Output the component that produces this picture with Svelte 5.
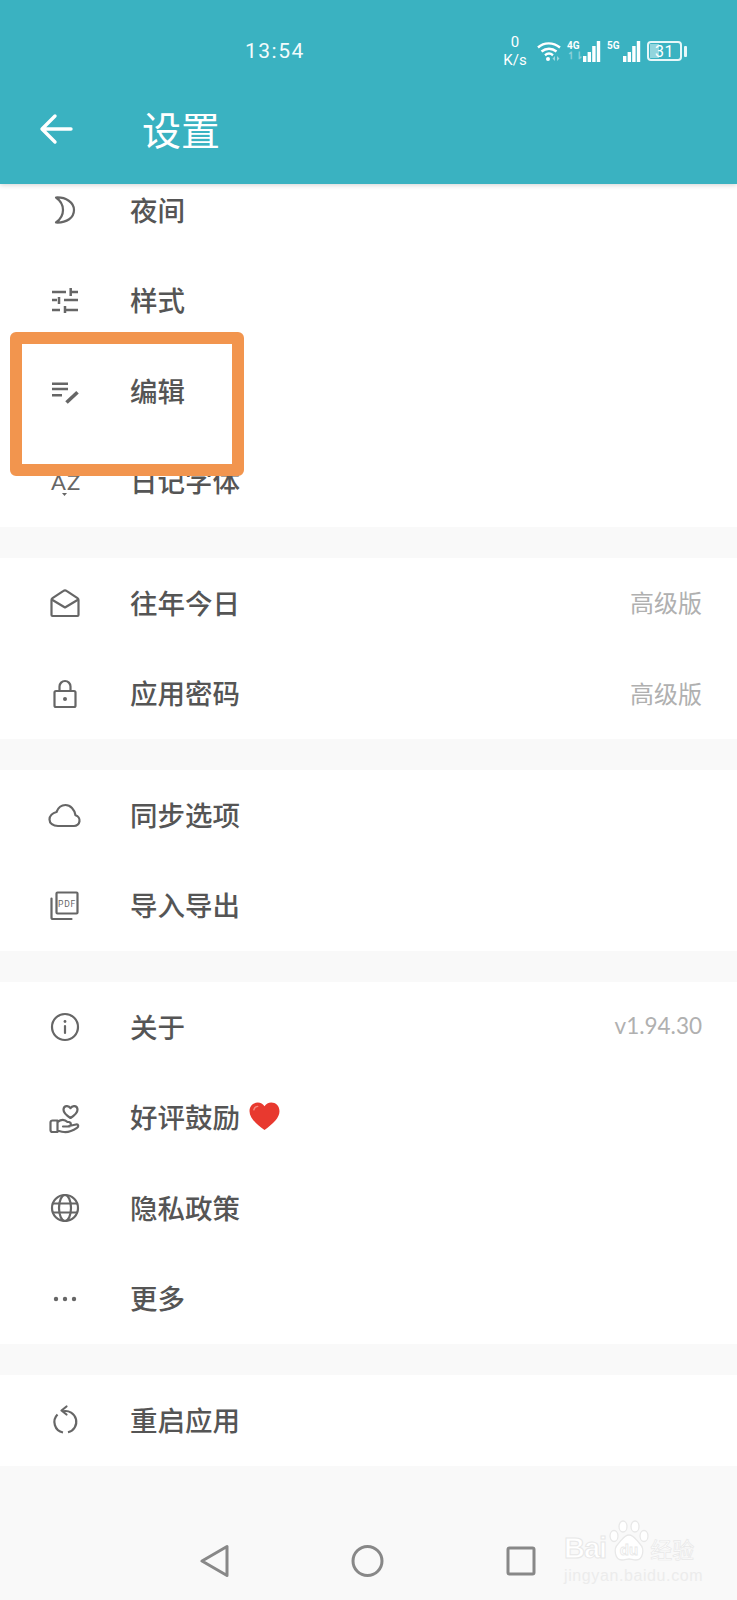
<script lang="ts">
  type Row = { id: string; label: string; note?: string; heart?: boolean };

  const sections: Row[][] = [
    [
      { id: 'moon', label: '夜间' },
      { id: 'tune', label: '样式' },
      { id: 'edit', label: '编辑' },
      { id: 'font', label: '日记字体' },
    ],
    [
      { id: 'mail', label: '往年今日', note: '高级版' },
      { id: 'lock', label: '应用密码', note: '高级版' },
    ],
    [
      { id: 'cloud', label: '同步选项' },
      { id: 'pdf', label: '导入导出' },
    ],
    [
      { id: 'info', label: '关于', note: 'v1.94.30' },
      { id: 'hand', label: '好评鼓励', heart: true },
      { id: 'globe', label: '隐私政策' },
      { id: 'dots', label: '更多' },
    ],
    [{ id: 'restart', label: '重启应用' }],
  ];

  const bars = [
    { x: 0, h: 6 },
    { x: 4.6, h: 10 },
    { x: 9.2, h: 16 },
    { x: 13.8, h: 21 },
  ];
</script>

<div class="phone">
  <header class="appbar">
    <div class="status">
      <span class="time">13:54</span>
      <div class="speed"><span>0</span><span>K/s</span></div>
      <svg class="wifi" width="24" height="20" viewBox="0 0 24 20" fill="none" stroke="#fff" stroke-width="2.4">
        <path d="M1 6.500C7 1 16 1 23 6.500" />
        <path d="M4.500 10.500C9 6.800 15 6.800 19.500 10.500" />
        <path d="M8 14.200c2.500-2 5.500-2 8 0" />
        <circle cx="11" cy="18" r="2" fill="#fff" stroke="none" />
        <path d="M18 15l-2.500 2.500 2.500 2.500zM20 15l2.500 2.500-2.500 2.500z" fill="#fff" stroke="none" opacity="0.5" />
      </svg>
      <div class="sim">
        <div class="sim-tag"><span>4G</span><span class="faint">↿⇂</span></div>
        <svg width="18" height="21" viewBox="0 0 18 21" fill="#fff">
          {#each bars as bar}
            <rect x={bar.x} y={21 - bar.h} width="3.400" height={bar.h} />
          {/each}
        </svg>
      </div>
      <div class="sim">
        <div class="sim-tag"><span>5G</span></div>
        <svg width="18" height="21" viewBox="0 0 18 21" fill="#fff">
          {#each bars as bar}
            <rect x={bar.x} y={21 - bar.h} width="3.400" height={bar.h} />
          {/each}
        </svg>
      </div>
      <div class="battery">
        <div class="cell"><i></i><span>31</span></div>
        <b></b>
      </div>
    </div>
    <div class="titlebar">
      <svg class="back" width="34" height="32" viewBox="0 0 34 32" fill="none" stroke="#fff" stroke-width="3.400" stroke-linecap="round" stroke-linejoin="round">
        <path d="M16 3L3 16l13 13M3.500 16H32" />
      </svg>
      <h1>设置</h1>
    </div>
  </header>

  <main class="list">
    {#each sections as rows}
      <section class="group">
        {#each rows as row}
          <div class="row">
            <svg class="icon" width="32" height="32" viewBox="0 0 32 32" fill="none" stroke="#666" stroke-width="2.200" stroke-linecap="round" stroke-linejoin="round">
              {#if row.id === 'moon'}
                <path d="M7 3.500C17 3 25 8.500 25 16S18 29 7 28.500C12 25 14 21 14 16S12 7 7 3.500Z" />
              {:else if row.id === 'tune'}
                <g stroke-width="2.500" stroke-linecap="butt">
                  <path d="M3 7h14M21.700 3v8M21.700 7H29M3 15h5M10 12v7M15 15h14M3 25h8M16 21v7M16 25h13" />
                </g>
              {:else if row.id === 'edit'}
                <path d="M3 8.700h16M3 14h16M3 20.300h10" stroke-width="2.400" stroke-linecap="butt" />
                <path d="M17.500 27.500l11-10.300" stroke-width="3.600" stroke-linecap="butt" />
              {:else if row.id === 'font'}
                <text class="az" x="2" y="24">A</text>
                <text class="az" x="18" y="24">Z</text>
                <path d="M13 27h5l-2.500 3z" fill="#666" stroke="none" />
              {:else if row.id === 'mail'}
                <path d="M2.500 13c0-.8.300-1.400 1-1.900L14.500 3.800c1-.7 2-.7 3 0l11 7.300c.7.500 1 1.100 1 1.900V28a1 1 0 0 1-1 1h-25a1 1 0 0 1-1-1Z" />
                <path d="M3.500 13L16 20.500 28.500 13" />
              {:else if row.id === 'lock'}
                <rect x="5.500" y="13" width="21" height="16" rx="1.500" />
                <path d="M10.500 13V8.500a5.500 5.500 0 0 1 11 0V13" />
                <circle cx="16" cy="21" r="2" fill="#666" stroke="none" />
              {:else if row.id === 'cloud'}
                <path d="M9 27H25a5.500 5.500 0 0 0 1.500-10.800C25.500 10.500 21.500 6 16.500 6c-4.500 0-7.500 3-9 7C3.500 14 .500 17 .500 20.500c0 3.800 3.500 6.500 8.500 6.500Z" />
              {:else if row.id === 'pdf'}
                <rect x="7.500" y="2.500" width="21" height="21" rx="1" />
                <path d="M2.500 8.500v19a1.500 1.500 0 0 0 1.500 1.500H22.500" />
                <text class="pdf" x="18" y="16.500">PDF</text>
              {:else if row.id === 'info'}
                <circle cx="16" cy="16" r="13" />
                <path d="M16 15v7" />
                <circle cx="16" cy="10.500" r="1.400" fill="#666" stroke="none" />
              {:else if row.id === 'hand'}
                <path d="M21.500 16c-3.800-2.500-7-4.800-7-8.300 0-4 5-5 7-1.500 2-3.500 7-2.500 7 1.500 0 3.500-3.200 5.800-7 8.300Z" />
                <path d="M8.500 18.500V30H3.500a2 2 0 0 1-2-2v-7.500a2 2 0 0 1 2-2ZM8.500 20c4-3 7-3 10 0h1.500a2.300 2.300 0 0 1 0 4.500H14M20 24l7-1.500c2.500-.5 3 2 1 3.300C24 28.500 20 30.500 15 30c-2.500-.3-4.500-1-6.500-1.500" />
              {:else if row.id === 'globe'}
                <circle cx="16" cy="16" r="13" />
                <ellipse cx="16" cy="16" rx="6" ry="13" />
                <path d="M4 11.500h24M4 20.500h24" />
              {:else if row.id === 'dots'}
                <g fill="#666" stroke="none">
                  <circle cx="7" cy="16" r="2.200" /><circle cx="16" cy="16" r="2.200" /><circle cx="25" cy="16" r="2.200" />
                </g>
              {:else if row.id === 'restart'}
                <path d="M8.500 10.500A10.700 10.700 0 0 0 14 28.500" stroke-linecap="butt" />
                <path d="M14 7.300A10.700 10.700 0 0 1 19 28.300" stroke-linecap="butt" />
                <path d="M17.500 2.500L12.500 6.500 17.500 10.500" />
              {/if}
            </svg>
            <span class="label">{row.label}</span>
            {#if row.heart}
              <svg class="heart" width="31" height="29" viewBox="0 0 32 30">
                <path d="M16 29C7 22 .500 16.500.500 9.500.500 4 4.500.500 9 .500c3 0 5.500 1.500 7 4 1.500-2.500 4-4 7-4 4.500 0 8.500 3.500 8.500 9C31.500 16.500 25 22 16 29Z" fill="#e8392f" />
                <path d="M5 8c.5-2 2-3.500 4-3.500" fill="none" stroke="#f6897f" stroke-width="1.500" stroke-linecap="round" />
              </svg>
            {/if}
            {#if row.note}
              <span class="note" class:latin={row.note.startsWith('v')}>{row.note}</span>
            {/if}
          </div>
        {/each}
      </section>
    {/each}
  </main>

  <footer class="nav">
    <svg width="29" height="34" viewBox="0 0 29 34" fill="none" stroke="#888" stroke-width="3" stroke-linejoin="round">
      <path d="M27 2.500V31.500L2 17Z" />
    </svg>
    <svg width="33" height="34" viewBox="0 0 33 34" fill="none" stroke="#888" stroke-width="3">
      <ellipse cx="16.500" cy="17" rx="14.500" ry="14.500" />
    </svg>
    <svg width="30" height="30" viewBox="0 0 30 30" fill="none" stroke="#888" stroke-width="3" stroke-linejoin="round">
      <rect x="2" y="2" width="26" height="26" rx="1.500" />
    </svg>
  </footer>

  <div class="watermark" aria-hidden="true">
    <div class="wm-top">
      <span class="wm-bai">Bai</span>
      <svg width="40" height="42" viewBox="0 0 40 42" fill="#fff" stroke="#e8e8e8" stroke-width="1.300">
        <ellipse cx="5" cy="16" rx="4" ry="5.500" /><ellipse cx="14" cy="6.500" rx="4" ry="5.500" />
        <ellipse cx="26" cy="6.500" rx="4" ry="5.500" /><ellipse cx="35" cy="16" rx="4" ry="5.500" />
        <path d="M20 15c-5 0-7 5-11 9-5 5-3 16 4 16 3 0 5-1 7-1s4 1 7 1c7 0 9-11 4-16-4-4-6-9-11-9Z" />
        <text x="20" y="35" class="wm-du">du</text>
      </svg>
      <span class="wm-cn">经验</span>
    </div>
    <div class="wm-url">jingyan.baidu.com</div>
  </div>

  <!-- annotation drawn on the screenshot -->
  <div class="mark"></div>
</div>

<style>
  :global(body) {
    margin: 0;
    background: #f9f9f9;
  }

  .phone {
    position: relative;
    width: 737px;
    height: 1600px;
    overflow: hidden;
    background: #f9f9f9;
    font-family: "Lato", "Noto Sans CJK SC", sans-serif;
  }

  .appbar {
    position: relative;
    z-index: 2;
    height: 184px;
    background: #3ab2c1;
    box-shadow: 0 1px 5px rgba(0, 0, 0, 0.18);
    color: #fff;
  }

  .status {
    display: flex;
    align-items: center;
    height: 102px;
    padding-left: 245px;
  }

  .time {
    width: 257px;
    font-family: "Roboto", sans-serif;
    font-size: 21px;
    letter-spacing: 1.5px;
    color: #f2fbfc;
  }

  .speed {
    display: flex;
    flex-direction: column;
    align-items: center;
    width: 26px;
    margin-right: 9px;
    font-family: "Roboto", sans-serif;
    font-size: 15px;
    line-height: 18px;
  }

  .wifi {
    margin-right: 6px;
  }

  .sim {
    display: flex;
    align-items: flex-end;
    gap: 2px;
    margin-right: 6px;
  }

  .sim-tag {
    display: flex;
    flex-direction: column;
    width: 14px;
    height: 21px;
    font-family: "Roboto", sans-serif;
    font-size: 10px;
    font-weight: 700;
    line-height: 10px;
  }

  .faint {
    opacity: 0.4;
  }

  .battery {
    display: flex;
    align-items: center;
    gap: 2px;
  }

  .cell {
    position: relative;
    display: flex;
    align-items: center;
    justify-content: center;
    width: 35px;
    height: 20px;
    box-sizing: border-box;
    border: 2px solid #e6f7f9;
    border-radius: 4px;
    font-family: "Roboto", sans-serif;
    font-size: 16px;
    letter-spacing: 0.5px;
  }

  .cell i {
    position: absolute;
    left: 1px;
    top: 1px;
    bottom: 1px;
    width: 9px;
    background: rgba(255, 255, 255, 0.45);
  }

  .cell span {
    position: relative;
  }

  .battery b {
    width: 3px;
    height: 11px;
    border-radius: 1px;
    background: #e6f7f9;
  }

  .titlebar {
    display: flex;
    align-items: center;
    height: 54px;
    padding-left: 39px;
  }

  h1 {
    margin: 0 0 3px 69px;
    font-family: "Noto Sans CJK SC", sans-serif;
    font-size: 39px;
    font-weight: 400;
  }

  .list {
    margin-top: -19px;
  }

  .group {
    background: #fff;
    margin-bottom: 31px;
  }

  .row {
    display: flex;
    align-items: center;
    height: 90.5px;
    padding: 0 35px 0 49px;
    color: #555;
  }

  .icon {
    flex: none;
    overflow: visible;
  }

  .label {
    margin: 0 0 3px 49px;
    font-family: "Noto Sans CJK SC", sans-serif;
    font-size: 27.500px;
    font-weight: 500;
  }

  .note {
    margin: 0 0 3px auto;
    font-size: 24px;
    color: #b0b0b0;
    font-family: "Noto Sans CJK SC", sans-serif;
  }

  .note.latin {
    margin-bottom: 4px;
    font-size: 22.500px;
    font-family: "Lato", sans-serif;
  }

  .heart {
    margin: 0 0 2px 9px;
  }

  .az {
    font-family: "Lato", sans-serif;
    font-size: 22px;
    fill: #666;
    stroke: none;
  }

  .pdf {
    font-family: "Roboto", sans-serif;
    font-size: 8.500px;
    font-weight: 400;
    letter-spacing: 0.8px;
    fill: #666;
    stroke: none;
    text-anchor: middle;
  }

  .nav {
    display: flex;
    align-items: center;
    height: 34px;
    margin-top: 78px;
    padding-left: 200px;
    gap: 122px;
  }

  .watermark {
    position: absolute;
    left: 564px;
    top: 1520px;
    width: 134px;
    color: #fff;
    font-family: "Liberation Sans", sans-serif;
  }

  .wm-top {
    display: flex;
    align-items: flex-end;
    height: 42px;
  }

  .wm-bai {
    font-size: 29px;
    font-weight: 700;
    line-height: 28px;
    letter-spacing: -1px;
    -webkit-text-stroke: 1px #e8e8e8;
  }

  .wm-top svg {
    flex: none;
    margin-left: 3px;
  }

  .wm-du {
    font-family: "Liberation Sans", sans-serif;
    font-size: 15px;
    font-weight: 700;
    text-anchor: middle;
    stroke-width: 0.800;
  }

  .wm-cn {
    font-family: "Noto Sans CJK SC", sans-serif;
    font-size: 22px;
    line-height: 28px;
    margin-left: 1px;
    white-space: nowrap;
    -webkit-text-stroke: 0.7px #e8e8e8;
  }

  .wm-url {
    font-size: 16px;
    font-weight: 400;
    text-align: center;
    margin-top: 5px;
    letter-spacing: 0.6px;
    white-space: nowrap;
    color: #ececec;
  }

  .mark {
    position: absolute;
    left: 10px;
    top: 332px;
    width: 234px;
    height: 144px;
    box-sizing: border-box;
    border: 12px solid #f2954e;
    border-radius: 6px;
    z-index: 3;
  }
</style>
